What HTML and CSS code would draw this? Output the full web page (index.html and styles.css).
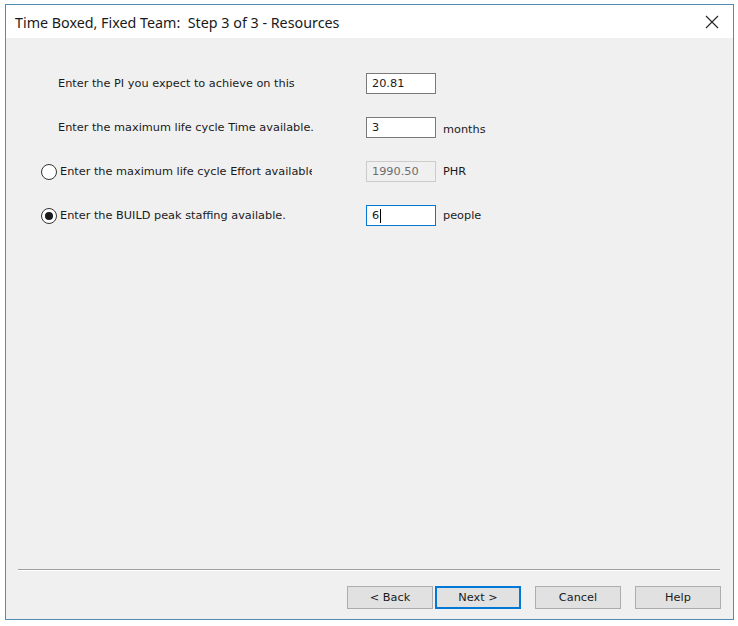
FILE: index.html
```html
<!DOCTYPE html>
<html>
<head>
<meta charset="utf-8">
<link rel="stylesheet" href="styles.css">
</head>
<body>
<div class="window">
  <div class="titlebar">
    <span class="title">Time Boxed, Fixed Team:&nbsp; Step 3 of 3 - Resources</span>
    <svg class="close" width="14" height="14" viewBox="0 0 14 14"><path d="M1 1 L13 13 M13 1 L1 13" stroke="#222" stroke-width="1.1" fill="none"/></svg>
  </div>
  <div class="content">
    <div class="row">
      <span class="radio-slot"></span>
      <span class="label plain">Enter the PI you expect to achieve on this</span>
      <div class="field">20.81</div>
      <span class="unit"></span>
    </div>
    <div class="row">
      <span class="radio-slot"></span>
      <span class="label plain">Enter the maximum life cycle Time available.</span>
      <div class="field">3</div>
      <span class="unit low">months</span>
    </div>
    <div class="row">
      <span class="radio-slot"><span class="radio"></span></span>
      <span class="label">Enter the maximum life cycle Effort available</span>
      <div class="field disabled">1990.50</div>
      <span class="unit">PHR</span>
    </div>
    <div class="row">
      <span class="radio-slot"><span class="radio checked"></span></span>
      <span class="label">Enter the BUILD peak staffing available.</span>
      <div class="field focused">6<span class="caret"></span></div>
      <span class="unit">people</span>
    </div>
  </div>
  <div class="footer">
    <div class="separator"></div>
    <div class="buttons">
      <div class="btn">&lt; Back</div>
      <div class="btn default">Next &gt;</div>
      <div class="btn gap">Cancel</div>
      <div class="btn gap">Help</div>
    </div>
  </div>
</div>
</body>
</html>
```

FILE: styles.css
```css
html, body {
  margin: 0;
  padding: 0;
  background: #ffffff;
}
body {
  padding: 4px 0 0 5px;
  width: 738px;
  height: 626px;
  box-sizing: border-box;
}
.window {
  width: 729px;
  height: 616px;
  box-sizing: border-box;
  border: 1px solid #4f8db3;
  background: #f0f0f0;
  display: flex;
  flex-direction: column;
}
.titlebar {
  height: 33px;
  background: #ffffff;
  display: flex;
  align-items: center;
  justify-content: space-between;
  padding: 0 14px 0 9px;
  flex: none;
}
.title {
  font-family: "Noto Sans", "Open Sans", sans-serif;
  font-size: 14.3px;
  color: #1a1a1a;
  padding-top: 1px;
}
.close {
  display: block;
  margin-top: 0px;
}
.content {
  flex: 1;
  padding: 35px 0 0 35px;
  display: flex;
  flex-direction: column;
  gap: 23px;
  font-family: "DejaVu Sans", sans-serif;
  font-size: 11.3px;
  color: #1a1a1a;
}
.row {
  display: flex;
  align-items: center;
  height: 21px;
}
.radio-slot {
  width: 19px;
  height: 16px;
  flex: none;
  display: flex;
  align-items: center;
}
.radio {
  width: 16px;
  height: 16px;
  box-sizing: border-box;
  border: 1px solid #333333;
  border-radius: 50%;
  background: #ffffff;
  display: flex;
  align-items: center;
  justify-content: center;
}
.radio.checked::after {
  content: "";
  width: 8px;
  height: 8px;
  border-radius: 50%;
  background: #1a1a1a;
}
.label {
  width: 252px;
  margin-right: 54px;
  white-space: nowrap;
  overflow: hidden;
  flex: none;
}
.label.plain {
  margin-left: -2px;
  width: 254px;
  overflow: visible;
}
.field {
  width: 70px;
  height: 21px;
  box-sizing: border-box;
  border: 1px solid #7a7a7a;
  background: #ffffff;
  padding: 0 5px;
  display: flex;
  align-items: center;
  flex: none;
  font-size: 11.3px;
}
.field.disabled {
  border-color: #cccccc;
  background: #f0f0f0;
  color: #6d6d6d;
}
.field.focused {
  border-color: #0078d7;
}
.caret {
  width: 1px;
  height: 14px;
  background: #000000;
  margin-left: 1px;
}
.unit {
  margin-left: 7px;
}
.unit.low {
  padding-top: 4px;
}
.footer {
  flex: none;
  height: 50px;
  box-sizing: border-box;
  padding: 0 12px 10px 12px;
  display: flex;
  flex-direction: column;
}
.separator {
  height: 1px;
  border-top: 1px solid #a0a0a0;
  border-bottom: 1px solid #ffffff;
  margin-right: 1px;
}
.buttons {
  margin-top: 15px;
  display: flex;
  justify-content: flex-end;
  gap: 2px;
}
.btn {
  width: 86px;
  height: 23px;
  box-sizing: border-box;
  border: 1px solid #adadad;
  background: #e1e1e1;
  display: flex;
  align-items: center;
  justify-content: center;
  font-family: "DejaVu Sans", sans-serif;
  font-size: 11.3px;
  color: #1a1a1a;
}
.btn.default {
  border: 2px solid #0078d7;
}
.btn.gap {
  margin-left: 12px;
}
```
